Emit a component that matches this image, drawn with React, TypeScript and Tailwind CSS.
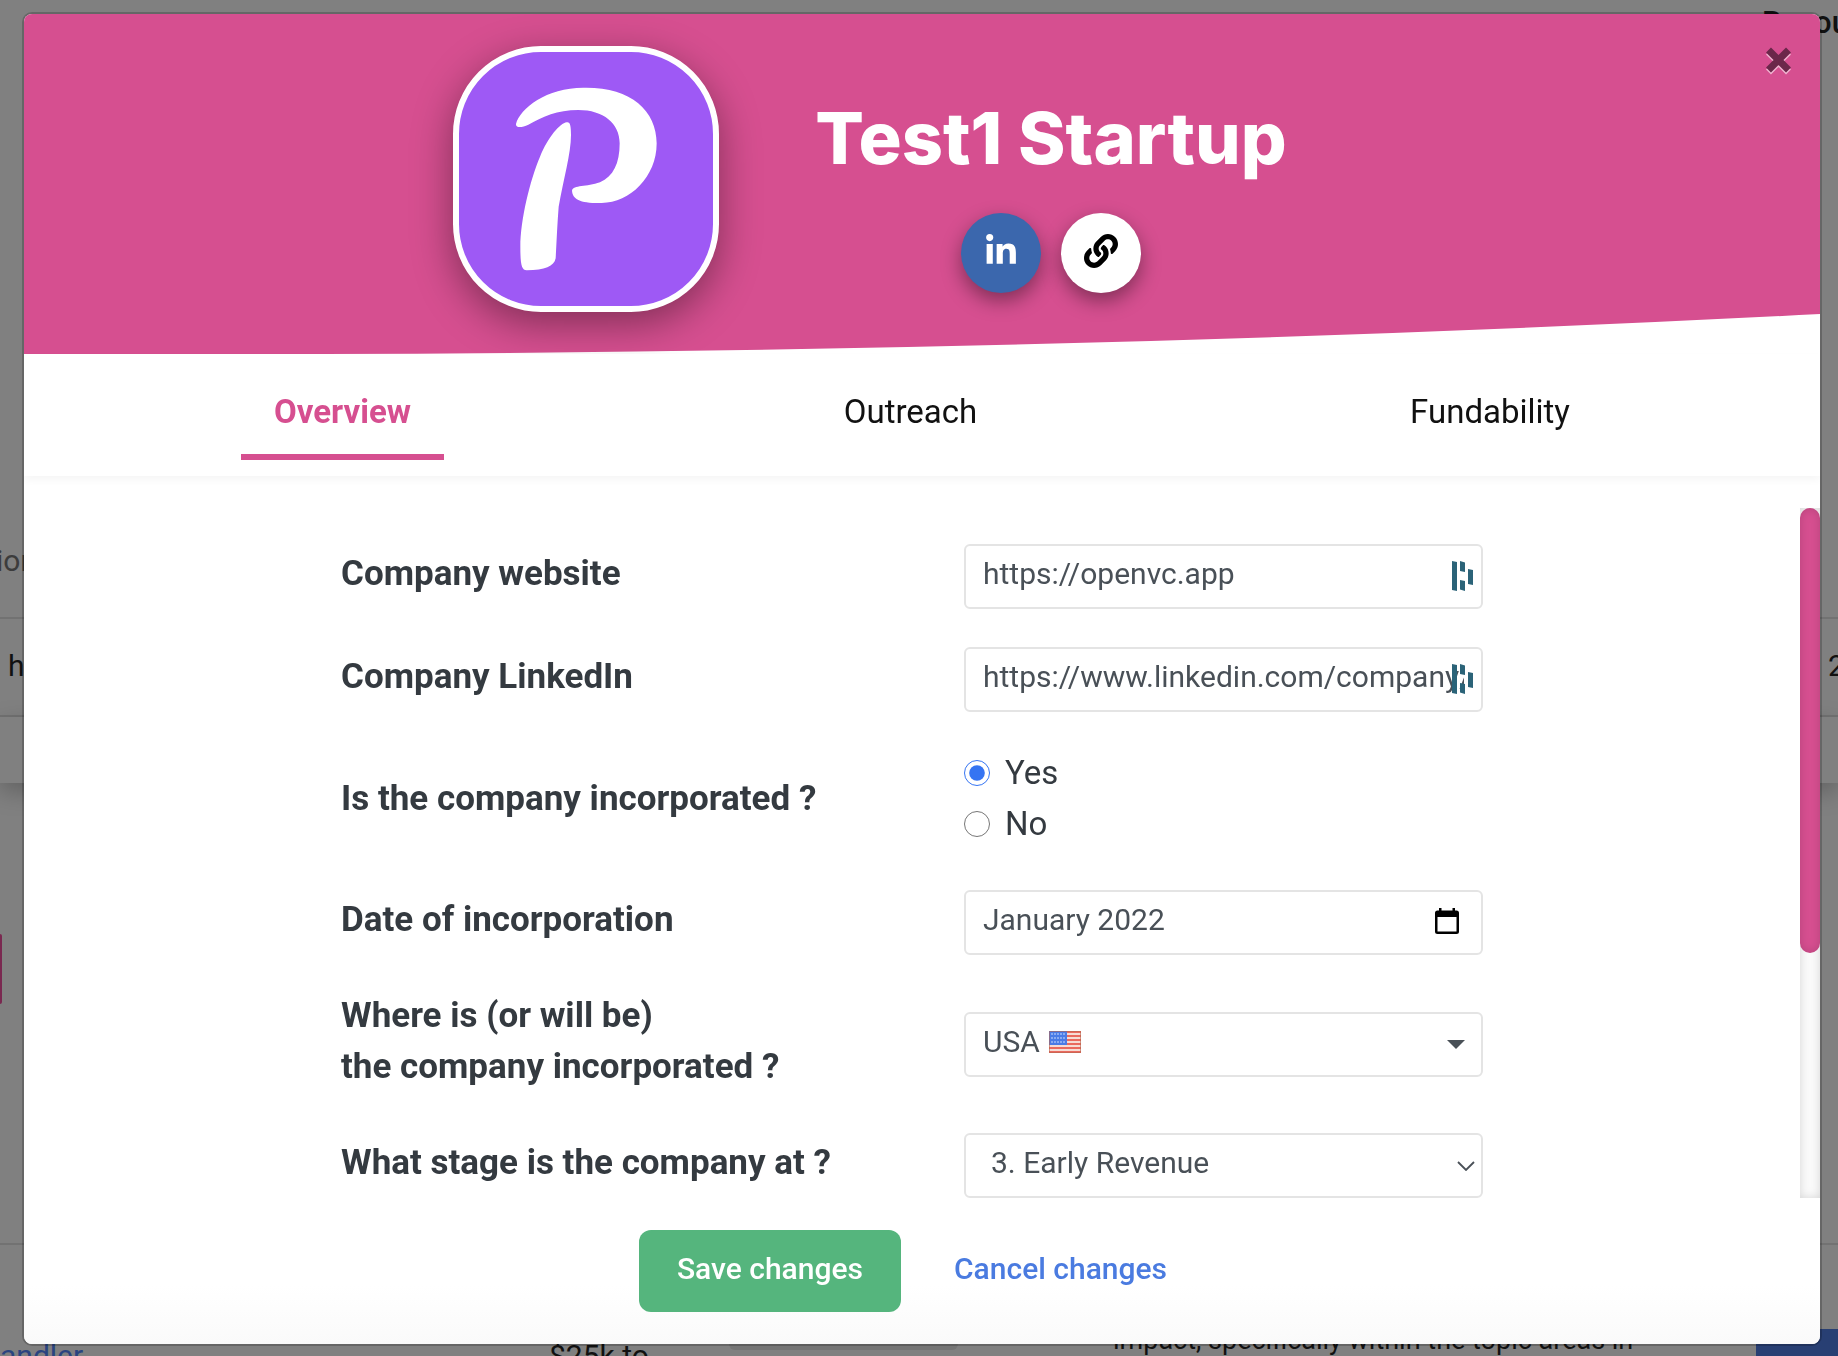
import React, { useState } from "react";
import { FaLink, FaLinkedinIn } from "react-icons/fa";

const fieldClass =
  "block h-[65px] w-full rounded-md border-2 border-[#e4e4e4] bg-white px-[17px] pb-1.5 text-[30px] text-[#495057] outline-none";

function Backdrop() {
  return (
    <div aria-hidden="true" className="fixed inset-0 flex flex-col overflow-hidden bg-[#808080] text-[30px] text-[#111111]">
      <div className="flex h-[475px] shrink-0 justify-end overflow-hidden">
        <span className="mt-1 w-[76px] overflow-hidden text-[31px] leading-[38px] font-medium whitespace-nowrap">Resou</span>
      </div>
      <div className="flex h-[144px] shrink-0 items-end border-b-2 border-[#727272] pb-[38px] text-[#3c3c3c]">
        <span className="-ml-1 w-7 overflow-hidden leading-9">ion</span>
      </div>
      <div className="flex h-[98px] shrink-0 items-center justify-between border-b-2 border-[#727272] pb-1">
        <span className="w-6 overflow-hidden pl-2">h</span>
        <span className="w-[10px] overflow-hidden">2</span>
      </div>
      <div className="h-[66px] shrink-0 shadow-[0_8px_24px_rgba(0,0,0,0.25)]" />
      <div className="h-[462px] shrink-0 border-b-2 border-[#727272] pt-[151px]">
        <div className="h-[70px] w-[2px] rounded-r bg-[#7a2850]" />
      </div>
      <div className="flex grow items-end">
        <span className="w-[549px] translate-y-4 leading-8 text-[#2a4480]">andler</span>
        <span className="w-[180px] translate-y-4 leading-8">$25k to</span>
        <span className="mb-[6px] h-7 w-[229px] rounded-md bg-[#757575]" />
        <span className="ml-[155px] text-[27px] leading-8 whitespace-nowrap">impact, specifically within the topic areas in</span>
        <span className="ml-auto h-[27px] w-[82px] bg-[#283f73]" />
      </div>
    </div>
  );
}

function BrandMark() {
  return (
    <div className="size-[266px] shrink-0 overflow-hidden rounded-[88px] border-[6px] border-white bg-[#9e59f5] shadow-[0_12px_40px_rgba(0,0,0,0.4)]">
      <svg viewBox="87 96 762 762" className="size-full" fill="#fff" role="img" aria-label="Startup logo">
        <path d="M258 312C270 265 350 203 460 203C600 200 680 270 680 370C680 470 600 549 515 549C450 550 428 538 426 512C430 494 470 502 510 487C550 470 569 430 569 370C569 310 520 270 445 270C380 270 340 290 295 314C275 324 256 324 258 312Z" />
        <path d="M410 307C420 305 423 315 423 345C423 400 400 480 386 560C382 610 380 660 377 715C372 740 345 750 290 751C275 750 271 735 271 680C271 600 300 480 330 410C355 350 390 310 410 307Z" />
      </svg>
    </div>
  );
}

function AutofillMark() {
  return (
    <svg viewBox="0 0 21 30" className="pointer-events-none absolute top-[17px] right-[10px] h-[30px] w-[21px]" fill="#2b6378">
      <path d="M0 0L5 1V30L0 29ZM8 0L13 1.500V11L8 10ZM8 19L13 20V30L8 28.500ZM16 8L21 9V24L16 23Z" />
    </svg>
  );
}

function UsFlag() {
  return (
    <svg viewBox="0 0 32 22" className="pointer-events-none absolute top-[19px] left-[85px] h-[22px] w-8">
      <rect width="32" height="22" fill="#f6dcd4" />
      {[0, 4, 8, 12, 16, 20].map((y) => (
        <rect key={y} y={y} width="32" height="2" fill="#ea6a5e" />
      ))}
      <rect width="18" height="14" fill="#4a7be6" />
      {[3, 7, 11].map((y) =>
        [3, 6, 9, 12, 15].map((x) => <circle key={`${x}-${y}`} cx={x} cy={y} r="0.8" fill="#dfe8ff" />),
      )}
      <rect x="0.500" y="0.500" width="31" height="21" fill="none" stroke="#b5644f" strokeOpacity="0.6" />
    </svg>
  );
}

function Row({ label, htmlFor, tall, children }: { label: React.ReactNode; htmlFor?: string; tall?: boolean; children: React.ReactNode }) {
  return (
    <div className={`grid grid-cols-[1fr_519px] content-center items-center ${tall ? "h-[102px]" : "h-[65px]"}`}>
      <label htmlFor={htmlFor} className="pb-1.5 text-[35px] leading-[51px] font-bold text-[#343a40]">
        {label}
      </label>
      <div className="relative">{children}</div>
    </div>
  );
}

const tabs = ["Overview", "Outreach", "Fundability"];

export default function App() {
  const [tab, setTab] = useState("Overview");
  const [incorporated, setIncorporated] = useState("Yes");

  return (
    <div className="min-h-screen font-[Roboto,sans-serif]">
      <Backdrop />
      <div className="relative pt-[14px] pr-[18px] pb-3 pl-6">
        <div role="dialog" aria-label="Test1 Startup" className="overflow-hidden rounded-lg bg-white shadow-[0_0_0_2px_rgba(0,0,0,0.2)]">
          <header className="relative h-[340px] bg-[#d64f90]">
            <svg viewBox="0 0 1796 40" preserveAspectRatio="none" className="absolute bottom-0 left-0 h-10 w-full" fill="#fff">
              <path d="M0 40H300Q1060 38 1796 0V40Z" />
            </svg>
            <div className="relative flex justify-center gap-24 pt-8 pr-[104px]">
              <BrandMark />
              <div className="flex flex-col items-center pt-[53px]">
                <h1 className="font-[Inter,sans-serif] text-[72px] leading-[78px] font-extrabold whitespace-nowrap text-white">Test1 Startup</h1>
                <div className="mt-9 flex gap-5">
                  <a href="#linkedin" aria-label="LinkedIn" className="flex size-20 items-center justify-center rounded-full bg-[#3b67ad] pb-1 text-white shadow-[0_8px_20px_rgba(0,0,0,0.4)]">
                    <FaLinkedinIn size={34} />
                  </a>
                  <a href="#website" aria-label="Website" className="flex size-20 items-center justify-center rounded-full bg-white pb-1 text-black shadow-[0_8px_20px_rgba(0,0,0,0.4)]">
                    <FaLink size={34} />
                  </a>
                </div>
              </div>
            </div>
            <button type="button" aria-label="Close" className="absolute top-[33px] right-[28px]">
              <svg viewBox="0 0 27 28" className="h-7 w-[27px]" strokeWidth="7">
                <path d="M3.500 5L23.500 25M23.500 5L3.500 25" stroke="#f0b4d0" />
                <path d="M3.500 3L23.500 23M23.500 3L3.500 23" stroke="#6b274a" />
              </svg>
            </button>
          </header>

          <nav className="relative flex h-[122px] justify-between bg-white px-[217px] pb-4 shadow-[0_4px_8px_rgba(0,0,0,0.04)]">
            {tabs.map((name) => (
              <button
                key={name}
                type="button"
                onClick={() => setTab(name)}
                className={`border-b-[6px] px-[33px] pt-4 text-[33px] leading-10 ${
                  tab === name ? "border-[#d64f90] font-bold text-[#d64f90]" : "border-transparent text-[#111111]"
                }`}
              >
                {name}
              </button>
            ))}
          </nav>

          <div className="mt-8 flex h-[690px]">
            <form className="flex-1 overflow-hidden pt-9">
              <div className="mx-auto flex max-w-[1142px] flex-col gap-[38px]">
                <Row label="Company website" htmlFor="website">
                  <input id="website" type="text" defaultValue="https://openvc.app" className={fieldClass} />
                  <AutofillMark />
                </Row>
                <Row label="Company LinkedIn" htmlFor="linkedin">
                  <input id="linkedin" type="text" defaultValue="https://www.linkedin.com/company/" className={fieldClass} />
                  <AutofillMark />
                </Row>
                <Row label="Is the company incorporated ?" tall>
                  <div className="pb-1.5">
                    {["Yes", "No"].map((v) => (
                      <label key={v} className="flex h-[51px] items-center gap-[15px] text-[33px] text-[#343a40]">
                        <input
                          type="radio"
                          name="incorporated"
                          checked={incorporated === v}
                          onChange={() => setIncorporated(v)}
                          className="size-[26px] accent-[#3574f2]"
                        />
                        {v}
                      </label>
                    ))}
                  </div>
                </Row>
                <Row label="Date of incorporation" htmlFor="date">
                  <input id="date" type="text" defaultValue="January 2022" className={fieldClass} />
                  <svg viewBox="0 0 24 26" className="pointer-events-none absolute top-[18px] right-[24px] h-[26px] w-6" fill="#000">
                    <path fillRule="evenodd" d="M4 0H6.500V2.500H17.500V0H20V2.500H21.500Q24 2.500 24 5V23.500Q24 26 21.500 26H2.500Q0 26 0 23.500V5Q0 2.500 2.500 2.500H4ZM2.500 9V23.500H21.500V9Z" />
                  </svg>
                </Row>
                <Row
                  tall
                  htmlFor="country"
                  label={
                    <>
                      Where is (or will be)
                      <br />
                      the company incorporated ?
                    </>
                  }
                >
                  <select id="country" className={`${fieldClass} appearance-none`}>
                    <option>USA</option>
                  </select>
                  <UsFlag />
                  <svg viewBox="0 0 18 9" className="pointer-events-none absolute top-[28px] right-[18px] h-[9px] w-[18px]" fill="#495057">
                    <path d="M0 0H18L9 9Z" />
                  </svg>
                </Row>
                <Row label="What stage is the company at ?" htmlFor="stage">
                  <select id="stage" className={`${fieldClass} appearance-none indent-2`}>
                    <option>3. Early Revenue</option>
                  </select>
                  <svg viewBox="0 0 18 10" className="pointer-events-none absolute top-[28px] right-[8px] h-[10px] w-[18px]" fill="none" stroke="#495057" strokeWidth="1.800">
                    <path d="M1 1L9 9L17 1" />
                  </svg>
                </Row>
              </div>
            </form>
            <div className="w-5 bg-[#fafafa] shadow-[inset_0_0_10px_rgba(0,0,0,0.15)]">
              <div className="h-[445px] rounded-[10px] bg-[#d64f90] shadow-[inset_0_0_10px_rgba(0,0,0,0.15)]" />
            </div>
          </div>

          <footer className="flex h-[146px] justify-center gap-[15px] bg-linear-to-b from-white from-60% to-[#fafafa] pt-8 text-[30px] font-medium">
            <button type="button" className="h-[82px] rounded-xl bg-[#55b57d] px-[38px] pb-[6px] text-white">
              Save changes
            </button>
            <button type="button" className="h-[82px] px-[38px] pb-[6px] text-[#4a7be0]">
              Cancel changes
            </button>
          </footer>
        </div>
      </div>
    </div>
  );
}
